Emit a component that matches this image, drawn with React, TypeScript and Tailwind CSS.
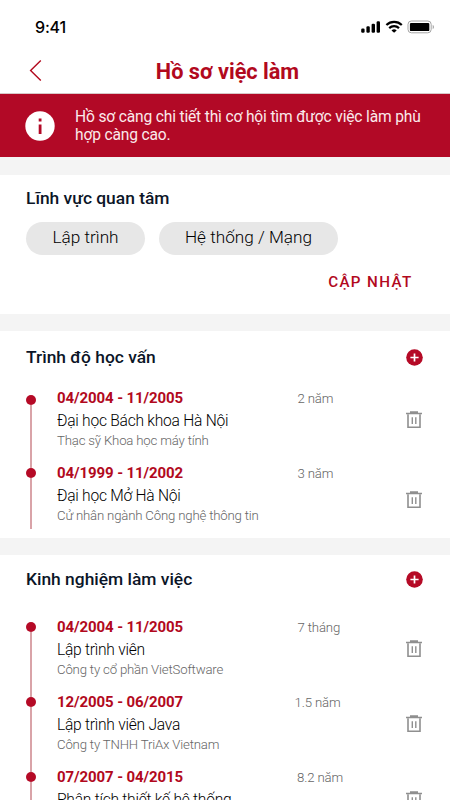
import React from "react";

type Entry = {
  period: string;
  title: string;
  detail: string;
  duration: string;
  durationInset: string;
  trashInset: string;
  dotInset: string;
  first: boolean;
};

const education: Entry[] = [
  { period: "04/2004 - 11/2005", title: "Đại học Bách khoa Hà Nội", detail: "Thạc sỹ Khoa học máy tính", duration: "2 năm", durationInset: "ml-[240.5px]", trashInset: "pt-[24px]", dotInset: "pt-[8px]", first: true },
  { period: "04/1999 - 11/2002", title: "Đại học Mở Hà Nội", detail: "Cử nhân ngành Công nghệ thông tin", duration: "3 năm", durationInset: "ml-[240.5px]", trashInset: "pt-[29px]", dotInset: "pt-[6px]", first: false },
];

const experience: Entry[] = [
  { period: "04/2004 - 11/2005", title: "Lập trình viên", detail: "Công ty cổ phần VietSoftware", duration: "7 tháng", durationInset: "ml-[240.5px]", trashInset: "pt-[24px]", dotInset: "pt-[6px]", first: true },
  { period: "12/2005 - 06/2007", title: "Lập trình viên Java", detail: "Công ty TNHH TriAx Vietnam", duration: "1.5 năm", durationInset: "ml-[237.5px]", trashInset: "pt-[24px]", dotInset: "pt-[6px]", first: false },
  { period: "07/2007 - 04/2015", title: "Phân tích thiết kế hệ thống", detail: "", duration: "8.2 năm", durationInset: "ml-[240px]", trashInset: "pt-[25px]", dotInset: "pt-[6px]", first: false },
];

function StatusIcons() {
  return (
    <svg width="76" height="16" viewBox="0 0 76 16" className="mt-[2px]" aria-hidden="true">
      <rect x="0.2" y="9.5" width="3.4" height="4.2" rx="1.2" />
      <rect x="5.4" y="7.3" width="3.4" height="6.4" rx="1.2" />
      <rect x="10.6" y="4.8" width="3.4" height="8.9" rx="1.2" />
      <rect x="15.6" y="2.3" width="3.4" height="11.4" rx="1.2" />
      <g fill="none" stroke="#000" strokeWidth="2.2">
        <path d="M25.4 6a11.2 11.2 0 0 1 15.4 0" />
        <path d="M28.2 9.1a7.2 7.2 0 0 1 9.8 0" />
      </g>
      <path d="M33.1 13.8l-2.6-2.4a3.8 3.8 0 0 1 5.2 0z" />
      <rect x="47" y="2" width="23.2" height="11.8" rx="3.4" fill="none" stroke="#a5a5a5" strokeWidth="1" />
      <rect x="48.9" y="3.9" width="19.4" height="8.2" rx="1.2" />
      <path d="M71.7 5.8v4.4a2.5 2.5 0 0 0 0-4.4z" fill="#a5a5a5" />
    </svg>
  );
}

function PlusButton() {
  return (
    <svg width="17" height="17" viewBox="0 0 17 17" className="mr-[27.5px]" aria-hidden="true">
      <circle cx="8.5" cy="8.5" r="8.3" fill="#b50a26" />
      <path d="M8.5 4.4v8.2M4.4 8.5h8.2" stroke="#fff" strokeWidth="1.7" />
    </svg>
  );
}

function Trash() {
  return (
    <svg width="18" height="18" viewBox="0 0 18 18" aria-hidden="true">
      <path d="M5 .3h8v1.5h4v1.5H1V1.8h4z" fill="#8f8f8f" />
      <path d="M3 3.2v13h12v-13" fill="none" stroke="#8f8f8f" strokeWidth="1.6" />
      <path d="M7.3 6.2v6.8M10.8 6.2v6.8" stroke="#8f8f8f" strokeWidth="1.4" />
    </svg>
  );
}

function Timeline({ entries }: { entries: Entry[] }) {
  return (
    <div className="flex flex-col pl-[26px]">
      {entries.map((e) => (
        <div key={e.period} className="grid h-[75px] grid-cols-[10px_1fr_45px]">
          <div className="flex flex-col items-center">
            <div className={`w-[1.5px] shrink-0 ${e.dotInset} ${e.first ? "bg-transparent" : "bg-[#d9a3a8]"}`} />
            <div className="size-[10px] shrink-0 rounded-full bg-[#b50a26]" />
            <div className="w-[1.5px] grow bg-[#d9a3a8]" />
          </div>
          <div className="pl-[21px]">
            <div className="flex h-[23px] items-center">
              <span className="w-0 whitespace-nowrap text-[15px] leading-[23px] font-bold tracking-[-0.1px] text-[#b2091d]">{e.period}</span>
              <span className={`whitespace-nowrap text-[13.2px] leading-[21px] font-light tracking-[-0.15px] text-[#666] ${e.durationInset}`}>{e.duration}</span>
            </div>
            <div className="h-[22px] text-[15.6px] leading-[22px] font-light tracking-[-0.25px] text-black">{e.title}</div>
            <div className="text-[13.2px] leading-[18px] font-light tracking-[-0.18px] text-[#666]">{e.detail}</div>
          </div>
          <div className={e.trashInset}><Trash /></div>
        </div>
      ))}
    </div>
  );
}

export default function App() {
  return (
    <div className="flex h-[800px] w-[450px] flex-col overflow-hidden bg-[#f4f4f4] font-[Roboto,sans-serif]">
      <header className="flex h-[94px] shrink-0 flex-col border-b border-[#d8c8c8] bg-white">
        <div className="flex h-[54px] justify-between pt-[17px] pr-[13px] pl-[35px]">
          <span className="font-[Inter,sans-serif] text-[16px] leading-[20px] font-medium tracking-[-0.2px]">9:41</span>
          <StatusIcons />
        </div>
        <div className="grid h-[34px] grid-cols-[30px_1fr_30px] items-center px-[26px]">
          <svg width="16" height="22" viewBox="0 0 16 22" fill="none" aria-hidden="true">
            <path d="M14.8 .5L4.6 10.5l10.2 10" stroke="#b2091d" strokeWidth="1.4" />
          </svg>
          <h1 className="pt-[2px] pl-[5px] text-center text-[21.7px] font-bold text-[#b2091d]">Hồ sơ việc làm</h1>
        </div>
      </header>
      <div className="flex h-[63px] shrink-0 items-center bg-[#b20926] pl-[25px]">
        <svg width="30" height="30" viewBox="0 0 30 30" aria-hidden="true">
          <circle cx="15" cy="15" r="14.7" fill="#fff" />
          <path d="M13.7 7.5h2.8v3h-2.8zM13.7 13.4h2.8V23h-2.8z" fill="#b20926" />
        </svg>
        <p className="pt-px pl-[20px] text-[15.6px] leading-[18px] tracking-[-0.17px] whitespace-nowrap text-[#fbe9eb]">
          Hồ sơ càng chi tiết thì cơ hội tìm được việc làm phù<br />hợp càng cao.
        </p>
      </div>
      <section className="mt-[18px] flex h-[139px] shrink-0 flex-col bg-white pt-[10px] pl-[26px]">
        <h2 className="text-[17.4px] leading-[26px] font-medium text-[#0b1527]">Lĩnh vực quan tâm</h2>
        <div className="mt-[11px] flex gap-[14px]">
          <span className="flex h-[33px] w-[119px] items-center justify-center rounded-full bg-[#e7e7e7] pb-px text-[17.2px] font-light">Lập trình</span>
          <span className="flex h-[33px] w-[179px] items-center justify-center rounded-full bg-[#e7e7e7] pb-px text-[17.2px] font-light">Hệ thống / Mạng</span>
        </div>
        <button className="mt-[15px] mr-[37.5px] self-end text-[15.2px] leading-[24px] font-medium tracking-[1.35px] text-[#b2091d]">CẬP NHẬT</button>
      </section>
      <section className="mt-[17px] h-[207px] shrink-0 overflow-hidden bg-white pt-[13px]">
        <div className="mb-[11px] flex h-[26px] items-center justify-between pl-[26px]">
          <h2 className="text-[17.4px] leading-[26px] font-medium text-[#0b1527]">Trình độ học vấn</h2>
          <PlusButton />
        </div>
        <div className="h-[148px] overflow-hidden pt-[6px]"><Timeline entries={education} /></div>
      </section>
      <section className="mt-[17px] grow overflow-hidden bg-white pt-[11px]">
        <div className="mb-[24px] flex h-[26px] items-center justify-between pl-[26px]">
          <h2 className="text-[17.4px] leading-[26px] font-medium text-[#0b1527]">Kinh nghiệm làm việc</h2>
          <PlusButton />
        </div>
        <Timeline entries={experience} />
      </section>
    </div>
  );
}
